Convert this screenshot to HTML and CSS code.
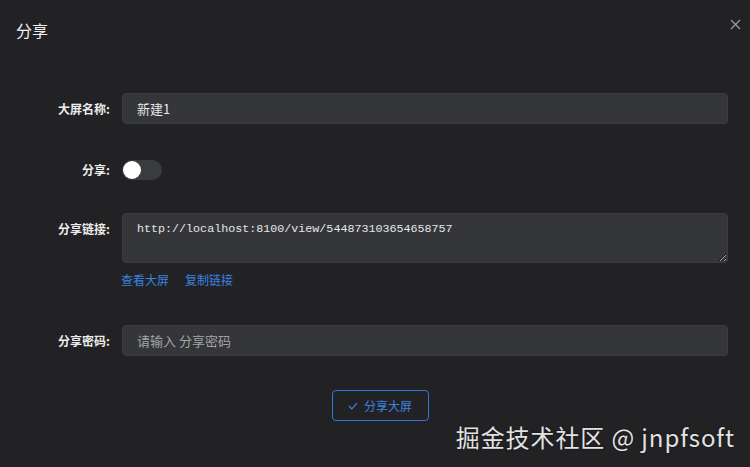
FILE: index.html
```html
<!DOCTYPE html>
<html lang="zh">
<head>
<meta charset="utf-8">
<link rel="stylesheet" href="styles.css">
</head>
<body>
<div class="dialog">
  <div class="header">
    <span class="title">分享</span>
    <span class="close">
      <svg width="11" height="11" viewBox="0 0 11 11"><path d="M1 1L10 10M10 1L1 10" stroke="#9a9a9e" stroke-width="1.3" fill="none"/></svg>
    </span>
  </div>
  <div class="form">
    <div class="row row-name">
      <label class="label">大屏名称:</label>
      <div class="control"><div class="input">新建1</div></div>
    </div>
    <div class="row row-switch">
      <label class="label">分享:</label>
      <div class="control"><span class="switch"><span class="knob"></span></span></div>
    </div>
    <div class="row row-link">
      <label class="label label-top">分享链接:</label>
      <div class="control">
        <textarea class="textarea" readonly>http://localhost:8100/view/544873103654658757</textarea>
        <div class="links"><a class="link">查看大屏</a><a class="link">复制链接</a></div>
      </div>
    </div>
    <div class="row row-pwd">
      <label class="label">分享密码:</label>
      <div class="control"><div class="input placeholder">请输入 分享密码</div></div>
    </div>
    <div class="footer">
      <button class="btn">
        <svg width="10" height="8" viewBox="0 0 10 8"><path d="M1 4L3.8 6.8L9 1.2" stroke="#3b82e0" stroke-width="1.2" fill="none"/></svg>
        <span>分享大屏</span>
      </button>
    </div>
  </div>
  <div class="watermark">掘金技术社区 @ jnpfsoft</div>
</div>
</body>
</html>
```

FILE: styles.css
```css
html, body {
  margin: 0;
  padding: 0;
  background: #222225;
  width: 750px;
  height: 467px;
  overflow: hidden;
  font-family: "Noto Sans CJK SC", "Liberation Sans", sans-serif;
}
.dialog {
  position: relative;
  width: 750px;
  height: 467px;
}
.header {
  display: flex;
  align-items: center;
  justify-content: space-between;
  padding: 20px 9px 0 16px;
  height: 20px;
}
.title {
  color: #f0f0f0;
  font-size: 16px;
  line-height: 20px;
}
.close {
  display: flex;
  margin-top: -11px;
}
.form {
  padding: 53px 22px 0 0;
}
.row {
  display: flex;
  align-items: center;
}
.label {
  width: 110px;
  flex: none;
  text-align: right;
  padding-right: 12px;
  box-sizing: content-box;
  color: #ececec;
  font-size: 12px;
  font-weight: 700;
  line-height: 16px;
}
.label-top {
  align-self: flex-start;
  padding-top: 8px;
}
.control {
  flex: 1;
  min-width: 0;
}
.input {
  height: 31px;
  box-sizing: border-box;
  background: #353639;
  border: 1px solid #3b3c40;
  border-radius: 4px;
  padding: 0 14px;
  display: flex;
  align-items: center;
  color: #e6e6e6;
  font-size: 13px;
}
.placeholder {
  color: #a3a4a8;
}
.row-switch {
  margin-top: 30px;
  height: 32px;
}
.switch {
  display: block;
  position: relative;
  width: 40px;
  height: 20px;
  border-radius: 10px;
  background: #3a3b3f;
}
.knob {
  position: absolute;
  left: 1px;
  top: 1px;
  width: 18px;
  height: 18px;
  border-radius: 50%;
  background: #ffffff;
}
.row-link {
  margin-top: 27px;
}
.textarea {
  display: block;
  width: 100%;
  height: 50px;
  box-sizing: border-box;
  background: #353639;
  border: 1px solid #3b3c40;
  border-radius: 4px;
  padding: 7px 14px;
  color: #e6e6e6;
  font-family: "Liberation Mono", monospace;
  font-size: 11.7px;
  line-height: 16px;
  resize: vertical;
  outline: none;
}
.links {
  display: flex;
  gap: 17px;
  margin-top: 9px;
  line-height: 16px;
}
.link {
  color: #3a82e0;
  font-size: 12px;
  margin-left: -1px;
}
.row-pwd {
  margin-top: 37px;
}
.footer {
  display: flex;
  justify-content: center;
  margin-top: 34px;
  padding-left: 32px;
}
.btn {
  display: flex;
  align-items: center;
  gap: 6px;
  width: 97px;
  height: 31px;
  justify-content: center;
  background: transparent;
  border: 1px solid #2f78d6;
  border-radius: 4px;
  color: #3b82e0;
  font-family: "Noto Sans CJK SC", sans-serif;
  font-size: 12px;
  padding: 0;
}
.watermark {
  position: absolute;
  right: 15px;
  bottom: 16px;
  color: #e2e2e2;
  font-family: "Noto Sans CJK SC", "Open Sans", sans-serif;
  font-size: 24px;
  letter-spacing: 0.9px;
  line-height: 28px;
  text-shadow: 0 0 2px rgba(0,0,0,0.6);
}
```
